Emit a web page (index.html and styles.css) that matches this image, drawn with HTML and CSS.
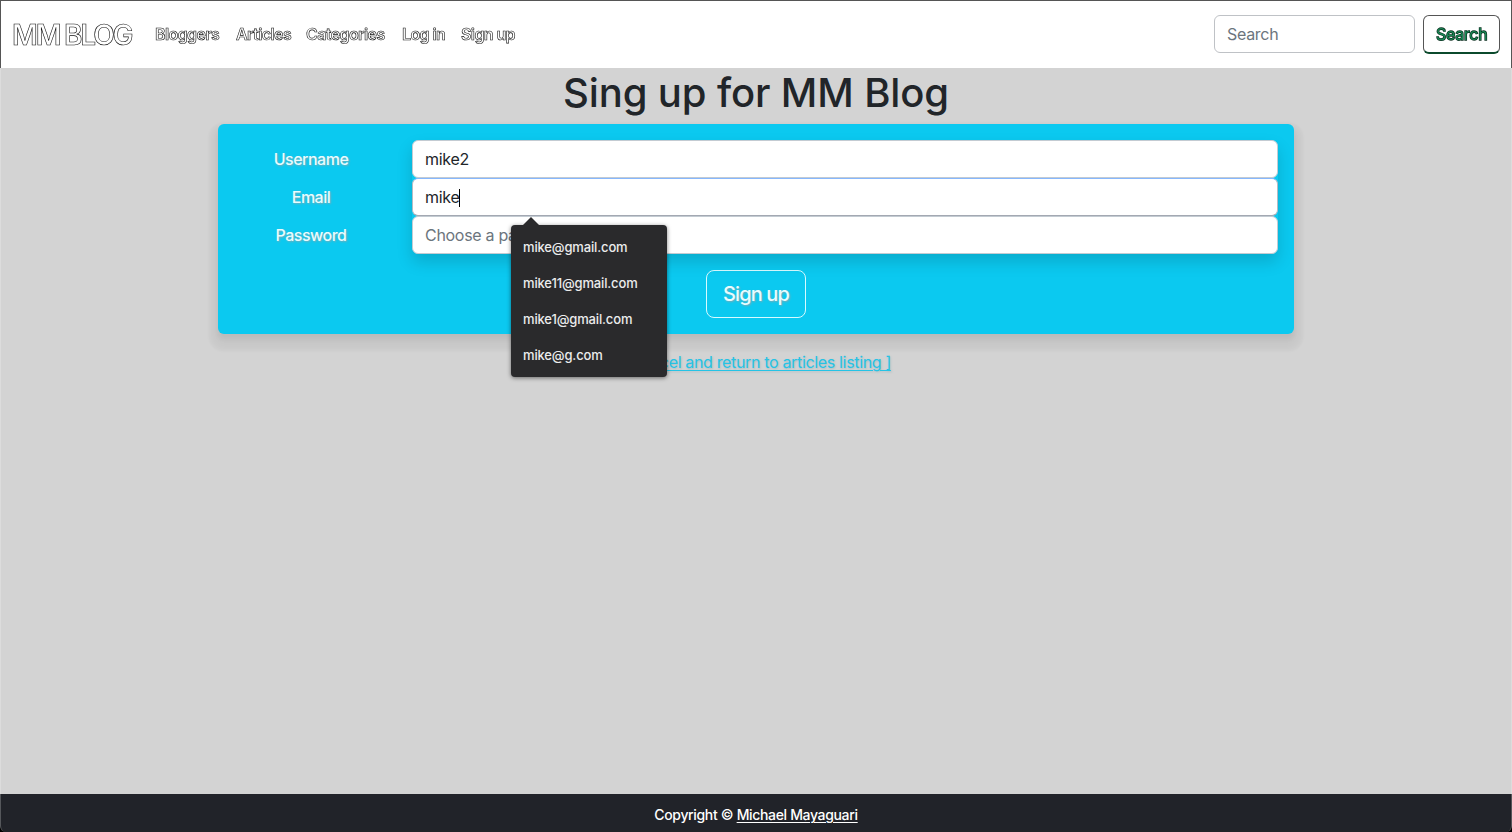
FILE: index.html
```html
<!DOCTYPE html>
<html lang="en">
<head>
<meta charset="utf-8">
<title>MM Blog</title>
<link rel="stylesheet" href="styles.css">
</head>
<body>
<header class="navbar">
  <a class="brand">MM BLOG</a>
  <nav class="nav">
    <a class="n1">Bloggers</a><a class="n2">Articles</a><a class="n3">Categories</a><a class="n4">Log in</a><a class="n5">Sign up</a>
  </nav>
  <form class="search">
    <div class="search-input">Search</div>
    <div class="search-button">Search</div>
  </form>
</header>
<main class="main">
  <h1 class="title">Sing up for MM Blog</h1>
  <section class="card">
    <div class="fields">
      <div class="labels"><label>Username</label><label>Email</label><label>Password</label></div>
      <div class="inputs">
        <div class="input">mike2</div>
        <div class="input focus">mike<span class="caret"></span>
          <ul class="suggestions">
            <li>mike@gmail.com</li><li>mike11@gmail.com</li><li>mike1@gmail.com</li><li>mike@g.com</li>
          </ul>
        </div>
        <div class="input placeholder">Choose a password</div>
      </div>
    </div>
    <div class="submit">Sign up</div>
  </section>
  <a class="cancel">[ Cancel and return to articles listing ]</a>
</main>
<footer class="footer"><span>Copyright © <u>Michael Mayaguari</u></span></footer>
</body>
</html>
```
FILE: styles.css
```css
* { box-sizing: border-box; }
body { margin: 0; height: 832px; overflow: hidden; display: flex; flex-direction: column; background: #000; color: #212529; font: 16px/24px Inter, sans-serif; letter-spacing: -0.3px; }
.navbar { flex: 0 0 68px; display: flex; align-items: center; padding: 0 11px; background: #fff; border: 1px solid #555; border-bottom: 0; }
.brand { width: 121px; margin-right: 22px; font-size: 28px; line-height: 34px; font-weight: 600; letter-spacing: -2.2px; word-spacing: 0; white-space: nowrap; color: #fff; -webkit-text-stroke: 0.6px #111; will-change: transform; }
.nav { display: flex; gap: 16px; padding-bottom: 2px; color: #fff; font-weight: 600; -webkit-text-stroke: 0.6px #111; letter-spacing: -0.6px; white-space: nowrap; will-change: transform; }
.n1 { width: 65px; } .n2 { width: 54px; } .n3 { width: 80px; } .n4 { width: 43px; } .n5 { width: 56px; }
.search { margin-left: auto; display: flex; gap: 8px; }
.search-input { width: 201px; height: 38px; padding: 6px 12px; border: 1px solid #bfc2c6; border-radius: 6px; color: #6c757d; }
.search-button { width: 77px; height: 39px; padding: 6px 12px; border: 1px solid #555; border-bottom: 2px solid #0b4a2c; border-radius: 6px; color: #198754; -webkit-text-stroke: 1.3px #05291a; paint-order: stroke; will-change: transform; }
.main { flex: 1; display: flex; flex-direction: column; align-items: center; background: #d3d3d3; border-left: 1px solid #dcdcdc; border-right: 1px solid #dcdcdc; }
.title { margin: 1px 0 7px; font-size: 40px; line-height: 48px; font-weight: 500; letter-spacing: -0.12px; white-space: nowrap; }
.card { width: 1076px; height: 210px; padding: 16px; background: #0bc9f0; border-radius: 6px; box-shadow: 0 5px 5px rgba(0,0,0,.06), 0 8px 8px 3px rgba(0,0,0,.025), 0 8px 3px 9px rgba(0,0,0,.035); }
.fields { display: flex; }
.labels { width: 178px; padding-right: 24px; display: flex; flex-direction: column; color: #e8fcff; font-weight: 500; letter-spacing: -0.5px; text-align: center; text-shadow: 1px 1px 2px #7dabb5; }
.labels label { height: 38px; padding-top: 7px; }
.inputs { flex: 1; border-radius: 6px; box-shadow: 0 8px 16px rgba(0,0,0,.15); }
.input { position: relative; height: 38px; padding: 6px 12px; background: #fff; border: 1px solid #c3cbd2; border-radius: 6px; }
.focus { border-color: #86b7fe #b5bbc4 #a3a8b2; }
.placeholder { color: #6c757d; }
.caret { display: inline-block; width: 1px; height: 18px; background: #000; vertical-align: -4px; }
.suggestions { position: absolute; z-index: 2; left: 98px; top: 46px; width: 156px; height: 152px; margin: 0; padding: 4px 0; list-style: none; background: #2a2a2c; color: #ececec; border-radius: 4px; font-size: 13px; line-height: 36px; font-weight: 500; letter-spacing: -0.15px; box-shadow: 0 1px 4px rgba(0,0,0,.5); }
.suggestions::before { content: ""; position: absolute; left: 12px; top: -8px; border: 8px solid transparent; border-top: 0; border-bottom-color: #2a2a2c; }
.suggestions li { padding-left: 12px; }
.submit { width: 100px; height: 48px; margin: 16px auto 0; border: 1px solid #d7faff; border-radius: 8px; color: #e8fcff; font-size: 20px; line-height: 46px; font-weight: 500; letter-spacing: -0.85px; text-align: center; text-shadow: 1px 1px 2px #7dabb5; }
.cancel { margin-top: 16px; color: #25c3e5; letter-spacing: -0.34px; text-decoration: underline; text-decoration-thickness: 1px; text-underline-offset: 2px; text-shadow: 1px 1px 2px #a8bdc2; }
.footer { flex: 0 0 38px; display: flex; align-items: center; justify-content: center; padding-top: 4px; background: #212329; border-left: 1px solid #55575b; border-right: 1px solid #55575b; border-radius: 0 0 6px 6px; color: #fff; font-size: 14px; line-height: 20px; font-weight: 500; letter-spacing: -0.34px; }
.footer u { text-underline-offset: 2px; text-decoration-thickness: 1px; }
```
